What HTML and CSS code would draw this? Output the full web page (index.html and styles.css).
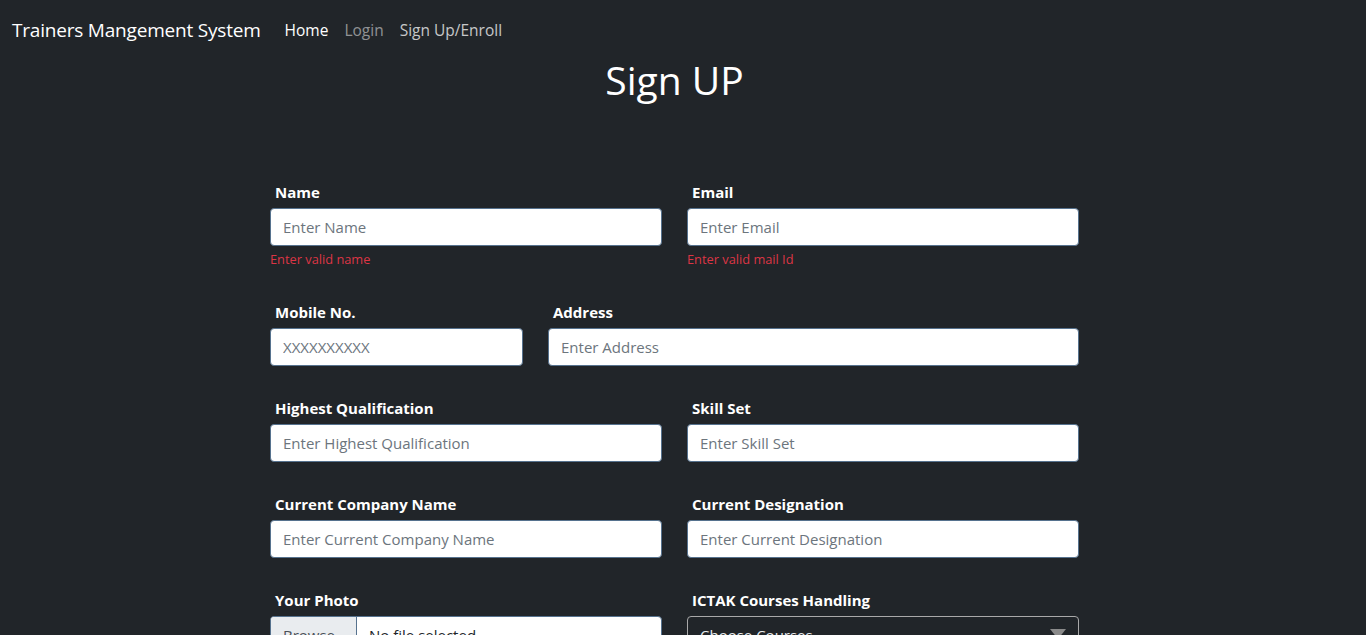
FILE: index.html
```html
<!DOCTYPE html>
<html lang="en">
<head>
<meta charset="utf-8">
<title>Sign UP</title>
<link rel="stylesheet" href="styles.css">
</head>
<body>
<nav class="navbar">
  <a class="brand" href="#">Trainers Mangement System</a>
  <ul class="nav">
    <li><a class="nav-link active" href="#">Home</a></li>
    <li><a class="nav-link muted" href="#">Login</a></li>
    <li><a class="nav-link soft" href="#">Sign Up/Enroll</a></li>
  </ul>
</nav>
<main class="page">
  <h1 class="title">Sign UP</h1>
  <form class="signup">
    <div class="row row-half row-err">
      <div class="field">
        <label class="label">Name</label>
        <input class="control" type="text" placeholder="Enter Name">
        <div class="error">Enter valid name</div>
      </div>
      <div class="field">
        <label class="label">Email</label>
        <input class="control" type="text" placeholder="Enter Email">
        <div class="error">Enter valid mail Id</div>
      </div>
    </div>
    <div class="row row-mobile">
      <div class="field">
        <label class="label">Mobile No.</label>
        <input class="control" type="text" placeholder="XXXXXXXXXX">
      </div>
      <div class="field">
        <label class="label">Address</label>
        <input class="control" type="text" placeholder="Enter Address">
      </div>
    </div>
    <div class="row row-half">
      <div class="field">
        <label class="label">Highest Qualification</label>
        <input class="control" type="text" placeholder="Enter Highest Qualification">
      </div>
      <div class="field">
        <label class="label">Skill Set</label>
        <input class="control" type="text" placeholder="Enter Skill Set">
      </div>
    </div>
    <div class="row row-half">
      <div class="field">
        <label class="label">Current Company Name</label>
        <input class="control" type="text" placeholder="Enter Current Company Name">
      </div>
      <div class="field">
        <label class="label">Current Designation</label>
        <input class="control" type="text" placeholder="Enter Current Designation">
      </div>
    </div>
    <div class="row row-half">
      <div class="field">
        <label class="label">Your Photo</label>
        <div class="file">
          <span class="file-btn">Browse</span>
          <span class="file-name">No file selected</span>
        </div>
      </div>
      <div class="field">
        <label class="label">ICTAK Courses Handling</label>
        <div class="select">
          <span class="select-text">Choose Courses</span>
          <span class="select-arrow"></span>
        </div>
      </div>
    </div>
  </form>
</main>
</body>
</html>
```

FILE: styles.css
```css
* { box-sizing: border-box; }
html, body {
  margin: 0;
  background: #212529;
  color: #fff;
  font-family: "Open Sans", "Noto Sans", "Liberation Sans", sans-serif;
}
.navbar {
  display: flex;
  align-items: center;
  padding: 10px 12px 6px;
  height: 56px;
}
.brand {
  color: #fff;
  text-decoration: none;
  font-size: 19px;
  line-height: 30px;
  letter-spacing: -0.2px;
  margin-right: 16px;
}
.nav {
  display: flex;
  list-style: none;
  margin: 0;
  padding: 0;
}
.nav-link {
  display: block;
  padding: 8px 8px;
  font-size: 15.5px;
  line-height: 24px;
  text-decoration: none;
}
.nav-link.active { color: #fff; }
.nav-link.muted { color: rgba(255,255,255,.5); }
.nav-link.soft { color: rgba(255,255,255,.75); }

.page {
  padding-right: 17px;
}
.title {
  margin: 0;
  text-align: center;
  font-weight: 400;
  font-size: 39px;
  line-height: 48px;
}
.signup {
  width: 809px;
  margin: 76px auto 0;
}
.row {
  display: grid;
  column-gap: 25px;
  margin-bottom: 30px;
}
.row-half { grid-template-columns: 1fr 1fr; }
.row-mobile { grid-template-columns: 253px 1fr; }
.row-err { margin-bottom: 31px; }
.field { display: flex; flex-direction: column; }
.label {
  display: block;
  padding-left: 5px;
  font-weight: 700;
  font-size: 15px;
  line-height: 24px;
  margin-bottom: 4px;
}
.control {
  display: block;
  width: 100%;
  height: 38px;
  padding: 6px 12px;
  font-family: inherit;
  font-size: 15px;
  line-height: 24px;
  color: #495057;
  background: #fff;
  border: 1px solid #56728e;
  border-radius: 4px;
  outline: none;
}
.control::placeholder { color: #6c757d; opacity: 1; }
.error {
  margin-top: 4px;
  font-size: 12.8px;
  line-height: 19px;
  color: #dc3545;
}
.file {
  display: flex;
  height: 38px;
  border: 1px solid #56728e;
  border-radius: 4px;
  background: #fff;
  overflow: hidden;
  font-size: 15px;
  line-height: 24px;
}
.file-btn {
  width: 86px;
  padding: 6px 12px;
  background: #e9ecef;
  color: #495057;
  border-right: 1px solid #56728e;
}
.file-name {
  padding: 6px 12px;
  color: #212529;
}
.select {
  position: relative;
  height: 38px;
  border: 1px solid #a9a9a9;
  border-radius: 4px;
  background: #212529;
  padding: 6px 12px;
  font-size: 15px;
  line-height: 24px;
  color: #e9ecef;
}
.select-arrow {
  position: absolute;
  right: 12px;
  top: 12px;
  width: 0;
  height: 0;
  border-left: 8px solid transparent;
  border-right: 8px solid transparent;
  border-top: 10px solid #8a8a8a;
}
```
